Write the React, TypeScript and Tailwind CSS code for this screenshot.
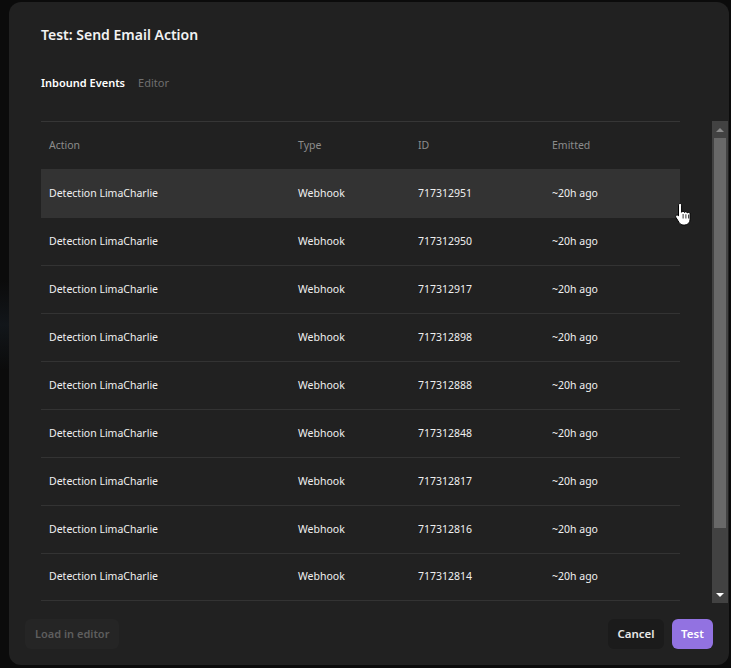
import React from 'react';

const ids = ['717312951', '717312950', '717312917', '717312898', '717312888', '717312848', '717312817', '717312816', '717312814'];

function HandCursor() {
  return (
    <svg className="absolute left-[674px] top-[202px]" width="20" height="24" viewBox="0 0 20 24">
      <path
        d="M6 1.5c1 0 1.6.7 1.6 1.6v7.2c.3-.6.9-.9 1.5-.9.8 0 1.3.5 1.4 1.1.3-.5.8-.8 1.4-.8.8 0 1.4.6 1.4 1.3.3-.4.8-.6 1.3-.6.9 0 1.5.7 1.5 1.5v5.3c0 3.4-2.3 5.8-5.5 5.8H9.3c-1.9 0-3.1-.9-4.1-2.3L2 15.6c-.6-.9-.4-1.8.3-2.3.7-.5 1.6-.3 2.1.4l.1.2V3.1c0-.9.6-1.6 1.5-1.6z"
        fill="#fff"
        stroke="#000"
        strokeWidth="1"
      />
      <path d="M9.1 12v4.5M11.9 12.3v4.2M14.6 12.6v3.9" stroke="#000" strokeWidth="0.8" />
    </svg>
  );
}

export default function App() {
  return (
    <div className="relative h-[668px] w-[731px] overflow-hidden bg-[#0b0b0b] pl-[9px] pt-[2px]" style={{ fontFamily: '"Noto Sans", "Open Sans", sans-serif' }}>
      <div className="absolute left-0 top-[280px] h-[90px] w-[9px] bg-gradient-to-b from-[#0b0b0b] via-[#12161a] to-[#0b0b0b]" />
      <div className="flex h-[663px] w-[720px] flex-col rounded-[12px] bg-[#212121]">
        <div className="px-8 pt-[23px] text-[14px] font-semibold leading-5 text-[#f2f2f2]">Test: Send Email Action</div>
        <div className="flex gap-[13px] px-8 pt-[30px] text-[11px] leading-4">
          <span className="font-semibold text-white">Inbound Events</span>
          <span className="text-[#6f6f6f]">Editor</span>
        </div>
        <div className="mt-[30px] flex h-[482px]">
          <div className="flex-1 overflow-hidden pl-8 pr-8">
            <div className="text-[10.5px]">
              <div className="grid h-12 grid-cols-[249px_120px_134px_1fr] items-center border-t border-[#363636] px-2 text-[#8c8c8c]">
                <span>Action</span>
                <span>Type</span>
                <span>ID</span>
                <span>Emitted</span>
              </div>
              {ids.map((id, i) => (
                <div
                  key={id}
                  className={`grid h-12 grid-cols-[249px_120px_134px_1fr] items-center border-t border-[#333333] px-2 text-[#f0f0f0] ${i === 0 ? 'bg-[#333333]' : ''} ${i === ids.length - 1 ? 'border-b' : ''}`}
                >
                  <span>Detection LimaCharlie</span>
                  <span>Webhook</span>
                  <span>{id}</span>
                  <span>~20h ago</span>
                </div>
              ))}
            </div>
          </div>
          <div className="mr-px flex w-4 flex-col bg-[#424242]">
            <div className="flex h-[17px] items-center justify-center">
              <div className="h-0 w-0 border-x-[4px] border-b-[4px] border-x-transparent border-b-[#8a8a8a]" />
            </div>
            <div className="mx-[2px] h-[390px] bg-[#686868]" />
            <div className="flex-1" />
            <div className="flex h-[17px] items-center justify-center">
              <div className="h-0 w-0 border-x-[4px] border-t-[4px] border-x-transparent border-t-white" />
            </div>
          </div>
        </div>
        <div className="flex flex-1 items-center pl-4 pr-4">
          <button className="h-[30px] rounded-[6px] bg-[#252525] px-[10px] text-[11px] font-semibold text-[#5e5e5e]">Load in editor</button>
          <div className="flex-1" />
          <button className="h-[30px] w-[56px] rounded-[6px] bg-[#1b1b1b] text-[11.5px] font-semibold text-[#e8e8e8]">Cancel</button>
          <button className="ml-[8px] h-[30px] w-[41px] rounded-[6px] bg-[#9272e1] text-[11.5px] font-semibold text-white">Test</button>
        </div>
      </div>
      <HandCursor />
    </div>
  );
}
